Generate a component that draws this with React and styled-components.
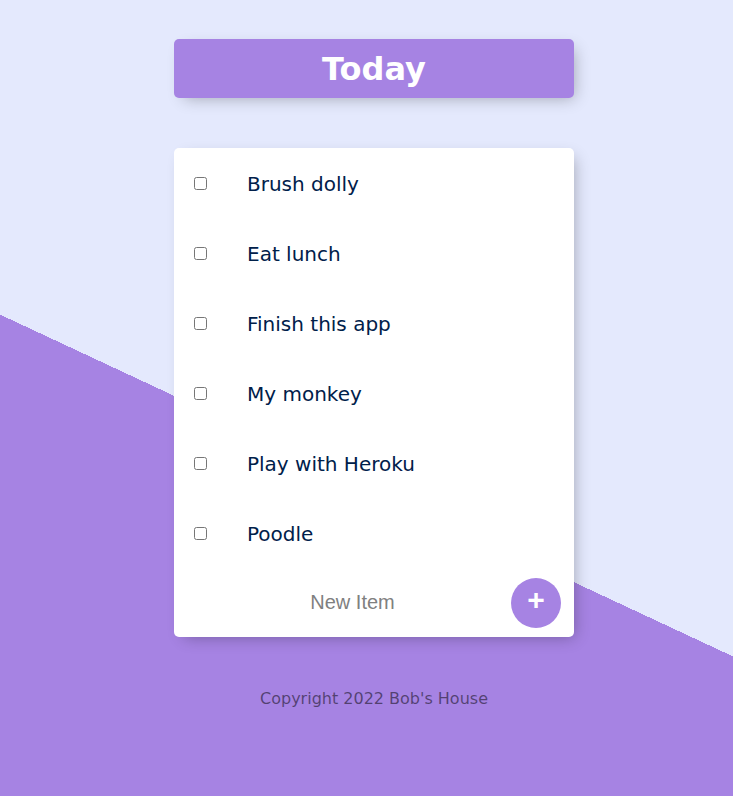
import React from 'react'
import styled, { createGlobalStyle } from 'styled-components'

const GlobalStyle = createGlobalStyle`
    html {
        min-height: 100%;
        background-color: #E4E9FD;
        background-image: linear-gradient(25deg, #A683E3 50%, #E4E9FD 50%);
        background-size: 100% 971px;
        background-repeat: no-repeat;
    }
    body {
        margin: 0;
        font-family: "DejaVu Sans", Verdana, sans-serif;
    }
`

const Page = styled.div`
    padding: 39px 0 40px 15px;
`

const Box = styled.div`
    width: 400px;
    margin: 0 auto 50px;
    background: ${props => props.$accent ? '#A683E3' : 'white'};
    border-radius: 5px;
    box-shadow: 5px 5px 15px -5px rgba(0, 0, 0, 0.3);
`

const Title = styled.h1`
    margin: 0;
    padding: 12px 10px 10px;
    color: #fff;
    text-align: center;
    font-size: 32px;
    line-height: 37px;
    font-weight: bold;
`

const Item = styled.div`
    height: 70px;
    display: flex;
    align-items: center;
    padding-top: 1px;
    box-sizing: border-box;
`

const Check = styled.input`
    margin: 20px;
    width: 13px;
    height: 13px;
`

const Label = styled.p`
    margin: 0;
    padding: 0 20px;
    font-size: 20px;
    color: #00204a;
`

const Form = styled.form`
    height: 69px;
    display: flex;
    align-items: center;
    margin-left: 20px;
`

const TextInput = styled.input`
    width: 317px;
    height: 60px;
    padding: 0;
    border: none;
    text-align: center;
    font-family: "Liberation Sans", Arial, sans-serif;
    font-size: 20px;
    font-weight: 200;
    &::placeholder {
        color: grey;
        opacity: 1;
    }
    &:focus {
        outline: none;
        box-shadow: inset 0 -3px 0 0 #A683E3;
    }
`

const AddButton = styled.button`
    width: 50px;
    height: 50px;
    border-radius: 50%;
    border: 0;
    background-color: #A683E3;
    color: #fff;
    font-family: "Liberation Sans", Arial, sans-serif;
    font-size: 30px;
    font-weight: bold;
    line-height: 1;
    padding: 0 0 6px;
    cursor: pointer;
`

const Footer = styled.footer`
    padding-top: 2px;
    color: rgba(0, 0, 0, 0.5);
    text-align: center;
    font-size: 16px;
`

const items = ['Brush dolly', 'Eat lunch', 'Finish this app', 'My monkey', 'Play with Heroku', 'Poodle']

const App = () => {
    return (
        <Page>
            <GlobalStyle />
            <Box $accent>
                <Title>Today</Title>
            </Box>
            <Box>
                {items.map(item => (
                    <Item key={item}>
                        <Check type="checkbox" />
                        <Label>{item}</Label>
                    </Item>
                ))}
                <Form onSubmit={e => e.preventDefault()}>
                    <TextInput type="text" placeholder="New Item" autoComplete="off" />
                    <AddButton type="submit">+</AddButton>
                </Form>
            </Box>
            <Footer>Copyright 2022 Bob's House</Footer>
        </Page>
    )
}

export default App
